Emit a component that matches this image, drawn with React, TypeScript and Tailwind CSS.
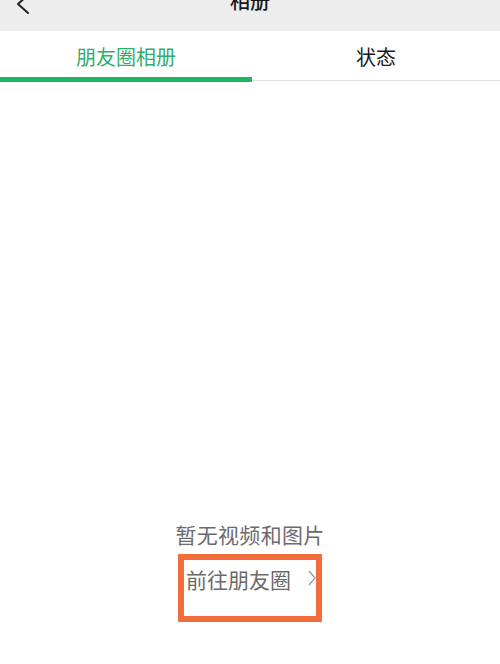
import React from 'react';

const font = { fontFamily: '"Noto Sans CJK SC", "Noto Sans", sans-serif' };

const App: React.FC = () => {
  return (
    <div className="w-[500px] h-[664px] bg-white flex flex-col overflow-hidden" style={font}>
      {/* 顶部导航 */}
      <div className="h-[31px] bg-[#ededed] overflow-hidden shrink-0">
        <div className="-mt-[19px] h-[40px] flex items-center relative">
          <svg className="absolute left-[14px] top-[12px]" width="18" height="22" viewBox="0 0 18 22" fill="none">
            <path d="M14 2 L4 11 L14 20" stroke="#222" strokeWidth="2" strokeLinecap="round" strokeLinejoin="round" />
          </svg>
          <div className="flex-1 text-center text-[20px] font-medium text-[#191919]">相册</div>
        </div>
      </div>

      {/* 标签 */}
      <div className="flex shrink-0">
        <div className="w-[252px] h-[51px] flex flex-col">
          <div className="flex-1 flex items-center justify-center pt-[5px] text-[20px] text-[#2fae6c]">朋友圈相册</div>
          <div className="h-[5px] bg-[#1db764]" />
        </div>
        <div className="flex-1 h-[51px] flex flex-col">
          <div className="flex-1 flex items-center justify-center pt-[5px] text-[20px] text-[#191919]">状态</div>
          <div className="h-[3px]" />
          <div className="h-[1px] bg-[#e3e3e3]" />
          <div className="h-[1px]" />
        </div>
      </div>

      {/* 空状态 */}
      <div className="flex-1 flex flex-col items-center justify-end pb-[42px]">
        <div className="text-[21px] leading-[28px] text-[#6b6b6b] tracking-[0.3px]">暂无视频和图片</div>
        <div className="mt-[6px] w-[144px] h-[68px] border-[6px] border-[#f36c3c] flex items-start pl-[2px] pt-[5px]">
          <span className="text-[21px] leading-[28px] text-[#6b6b6b]">前往朋友圈</span>
          <svg className="ml-[17px] mt-[5px]" width="8" height="16" viewBox="0 0 8 16" fill="none">
            <path d="M1 1 L7 8 L1 15" stroke="#9a9a9a" strokeWidth="1.3" />
          </svg>
        </div>
      </div>
    </div>
  );
};

export default App;
